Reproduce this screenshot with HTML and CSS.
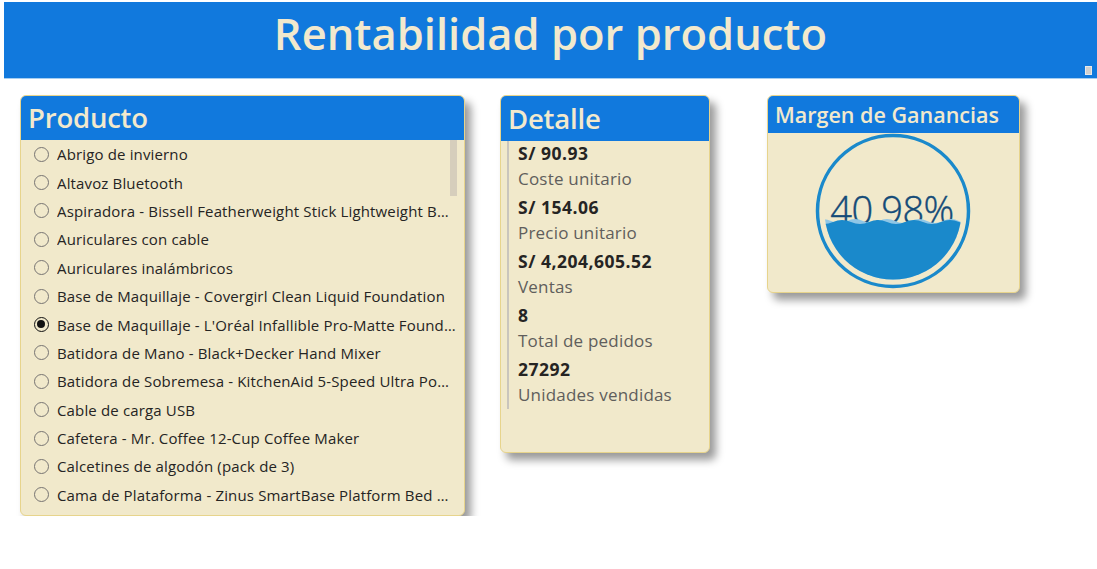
FILE: index.html
```html
<!DOCTYPE html>
<html lang="es">
<head>
<meta charset="utf-8">
<title>Rentabilidad por producto</title>
<link rel="stylesheet" href="styles.css">
</head>
<body>
<header class="banner">
  <h1 class="banner-title">Rentabilidad por producto</h1>
  <span class="resize-handle"></span>
</header>
<main class="board">
  <section class="card card-product">
    <h2 class="card-head head-lg">Producto</h2>
    <div class="list-wrap">
      <ul class="product-list">
        <li class="item"><span class="radio"></span><span class="label">Abrigo de invierno</span></li>
        <li class="item"><span class="radio"></span><span class="label">Altavoz Bluetooth</span></li>
        <li class="item"><span class="radio"></span><span class="label">Aspiradora - Bissell Featherweight Stick Lightweight Bagless Vacuum</span></li>
        <li class="item"><span class="radio"></span><span class="label">Auriculares con cable</span></li>
        <li class="item"><span class="radio"></span><span class="label">Auriculares inalámbricos</span></li>
        <li class="item"><span class="radio"></span><span class="label">Base de Maquillaje - Covergirl Clean Liquid Foundation</span></li>
        <li class="item"><span class="radio checked"></span><span class="label">Base de Maquillaje - L'Oréal Infallible Pro-Matte Foundation</span></li>
        <li class="item"><span class="radio"></span><span class="label">Batidora de Mano - Black+Decker Hand Mixer</span></li>
        <li class="item"><span class="radio"></span><span class="label">Batidora de Sobremesa - KitchenAid 5-Speed Ultra Power Hand Mixer</span></li>
        <li class="item"><span class="radio"></span><span class="label">Cable de carga USB</span></li>
        <li class="item"><span class="radio"></span><span class="label">Cafetera - Mr. Coffee 12-Cup Coffee Maker</span></li>
        <li class="item"><span class="radio"></span><span class="label">Calcetines de algodón (pack de 3)</span></li>
        <li class="item"><span class="radio"></span><span class="label">Cama de Plataforma - Zinus SmartBase Platform Bed Frame</span></li>
      </ul>
      <span class="scroll-thumb"></span>
    </div>
  </section>

  <section class="card card-detail">
    <h2 class="card-head head-lg">Detalle</h2>
    <div class="stats">
      <div class="stat"><div class="stat-value">S/ 90.93</div><div class="stat-label">Coste unitario</div></div>
      <div class="stat"><div class="stat-value">S/ 154.06</div><div class="stat-label">Precio unitario</div></div>
      <div class="stat"><div class="stat-value">S/ 4,204,605.52</div><div class="stat-label">Ventas</div></div>
      <div class="stat"><div class="stat-value">8</div><div class="stat-label">Total de pedidos</div></div>
      <div class="stat"><div class="stat-value">27292</div><div class="stat-label">Unidades vendidas</div></div>
    </div>
  </section>

  <section class="card card-margin">
    <h2 class="card-head head-sm">Margen de Ganancias</h2>
    <div class="gauge-wrap">
      <svg class="gauge" width="156" height="156" viewBox="0 0 156 156">
        <defs>
          <clipPath id="inner">
            <circle cx="78" cy="78" r="68.5"/>
          </clipPath>
        </defs>
        <circle cx="78" cy="78" r="75.5" fill="none" stroke="#1A89CB" stroke-width="3.5"/>
        <text class="gauge-text" x="77" y="91" text-anchor="middle">40.98%</text>
        <g clip-path="url(#inner)">
          <path fill="#8FC6E6" d="M0 89 Q 8 84 16 88 T 32 88 T 48 88 T 64 88 T 80 88 T 96 88 T 112 88 T 128 88 T 144 88 T 160 88 L160 160 L0 160 Z"/>
          <path fill="#1A89CB" d="M0 89 Q 9 93 18 89 T 36 89 T 54 89 T 72 89 T 90 89 T 108 89 T 126 89 T 144 89 T 162 89 L162 160 L0 160 Z"/>
        </g>
      </svg>
    </div>
  </section>
</main>
</body>
</html>
```

FILE: styles.css
```css
* { box-sizing: border-box; }

html, body {
  margin: 0;
  padding: 0;
  background: #ffffff;
  font-family: "Open Sans", "Noto Sans", "Liberation Sans", sans-serif;
}

.banner {
  position: relative;
  margin: 2px 0 0 4px;
  height: 77px;
  background: #1179DD;
  border-bottom: 1px solid #A6CEF1;
  display: flex;
  align-items: center;
  justify-content: center;
}

.banner-title {
  margin: 0;
  font-size: 43.5px;
  font-weight: 600;
  color: #F2E9CD;
  letter-spacing: 0;
  line-height: 1;
  padding-bottom: 12px;
}

.resize-handle {
  position: absolute;
  right: 5px;
  bottom: 3px;
  width: 7px;
  height: 9px;
  background: #D0D0D0;
  border: 1px solid #E8E8E8;
}

.board {
  display: flex;
  align-items: flex-start;
  padding: 16px 0 0 20px;
}

.card {
  background: #F1E9CB;
  border: 1px solid #E7D48C;
  border-radius: 6px;
  box-shadow: 6px 7px 9px rgba(0, 0, 0, 0.4);
  overflow: hidden;
}

.card-head {
  margin: 0;
  background: #1179DD;
  color: #F2E9CD;
  font-weight: 600;
}

.head-lg {
  height: 44px;
  font-size: 27.5px;
  line-height: 44px;
  padding-left: 7px;
  letter-spacing: -0.2px;
}

.head-sm {
  height: 37px;
  font-size: 21.5px;
  line-height: 37px;
  padding-left: 7px;
  letter-spacing: 0;
}

/* Product slicer */
.card-product {
  width: 445px;
  height: 421px;
}

.list-wrap {
  position: relative;
  height: 375px;
  overflow: hidden;
}

.product-list {
  list-style: none;
  margin: 0;
  padding: 0 0 0 13px;
}

.item {
  height: 28.4px;
  display: flex;
  align-items: center;
  font-size: 15px;
  color: #252423;
}

.radio {
  flex: none;
  width: 15px;
  height: 15px;
  border: 1px solid #777472;
  border-radius: 50%;
  margin-right: 8px;
  position: relative;
}

.radio.checked {
  border: 1.5px solid #111;
}

.radio.checked::after {
  content: "";
  position: absolute;
  left: 2px;
  top: 2px;
  width: 8px;
  height: 8px;
  border-radius: 50%;
  background: #111;
}

.label {
  width: 399px;
  white-space: nowrap;
  overflow: hidden;
  text-overflow: ellipsis;
  letter-spacing: 0.15px;
}

.scroll-thumb {
  position: absolute;
  right: 7px;
  top: 0;
  width: 7px;
  height: 56px;
  background: #D6CEBC;
}

/* Detail card */
.card-detail {
  margin-left: 35px;
  width: 210px;
  height: 358px;
}

.card-detail .head-lg {
  height: 45px;
  line-height: 45px;
}

.stats {
  margin-left: 6px;
  border-left: 2px solid #C9C5BD;
  padding-left: 9px;
}

.stat {
  margin-bottom: 4px;
}

.stat:last-child {
  margin-bottom: 0;
  padding-bottom: 2px;
}

.stat-value {
  height: 26px;
  line-height: 24px;
  font-size: 17.5px;
  font-weight: 700;
  color: #252423;
  letter-spacing: 0.5px;
}

.stat-label {
  height: 24px;
  line-height: 24px;
  font-size: 17px;
  color: #605E5C;
  letter-spacing: 0.2px;
}

/* Margin gauge */
.card-margin {
  margin-left: 57px;
  width: 253px;
  height: 198px;
}

.gauge-wrap {
  display: flex;
  justify-content: center;
  padding-right: 2px;
}

.gauge {
  display: block;
}

.gauge-text {
  font-family: "Open Sans", "Noto Sans", sans-serif;
  font-size: 38px;
  font-weight: 300;
  fill: #144B78;
  stroke: #144B78;
  stroke-width: 0.4px;
  letter-spacing: -0.5px;
}
```
